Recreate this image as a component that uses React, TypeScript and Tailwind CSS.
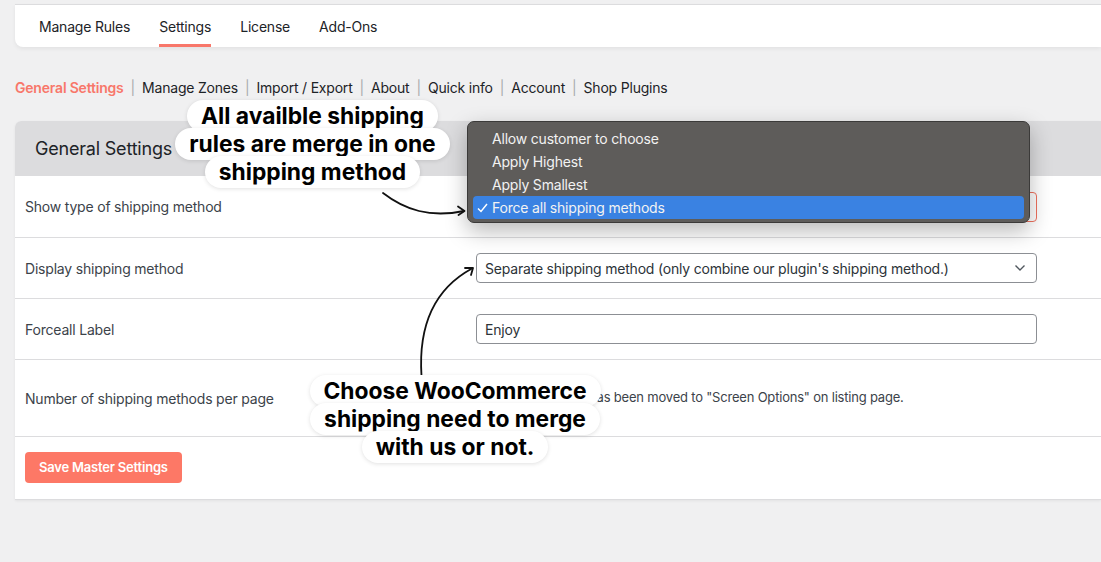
import type { ReactNode } from 'react'

const tabs = ['Manage Rules', 'Settings', 'License', 'Add-Ons']
const subLinks = [
  'General Settings',
  'Manage Zones',
  'Import / Export',
  'About',
  'Quick info',
  'Account',
  'Shop Plugins',
]
const options = [
  'Allow customer to choose',
  'Apply Highest',
  'Apply Smallest',
  'Force all shipping methods',
]

type RowProps = {
  label: string
  height: string
  children?: ReactNode
}

function Row({ label, height, children }: RowProps) {
  return (
    <div className={`flex items-center border-t border-[#dcdcde] ${height}`}>
      <div className="w-[461px] shrink-0 pl-[10px] text-[14px] text-[#3c434a]">
        {label}
      </div>
      {children}
    </div>
  )
}

function Bubble({ lines, className }: { lines: string[]; className: string }) {
  return (
    <div className={`absolute flex flex-col items-center tracking-normal ${className}`}>
      {lines.map((line, i) => (
        <div
          key={line}
          className={`rounded-[16px] bg-white px-[14px] py-[2px] text-[22.8px] leading-[28px] font-bold text-black shadow-[0_1px_4px_rgba(0,0,0,0.12)] ${
            i > 0 ? '-mt-[4px]' : ''
          }`}
        >
          {line}
        </div>
      ))}
    </div>
  )
}

export default function App() {
  return (
    <div className="relative h-[562px] w-full overflow-hidden bg-[#f0f0f1] font-['Inter',sans-serif] tracking-[-0.2px]">
      {/* top tab bar */}
      <div className="ml-[15px] mt-[4px] flex h-[43px] rounded-bl-[8px] border-t border-[#dcdcde] bg-white pl-[24px] shadow-[0_2px_4px_rgba(0,0,0,0.06)]">
        <div className="flex gap-[29px]">
          {tabs.map((t) => (
            <div
              key={t}
              className={`flex items-center border-b-[3px] pt-[3px] text-[14px] text-[#1d2327] ${
                t === 'Settings' ? 'border-[#f8776a]' : 'border-transparent'
              }`}
            >
              {t}
            </div>
          ))}
        </div>
      </div>

      {/* sub navigation */}
      <div className="ml-[15px] mt-[31px] flex h-[20px] items-center text-[14px] leading-[20px]">
        {subLinks.map((s, i) => (
          <div key={s} className="flex items-center">
            {i > 0 && <span className="mx-[7px] text-[#a7aaad]">|</span>}
            <span
              className={
                i === 0 ? 'font-semibold text-[#f8776a]' : 'text-[#1d2327]'
              }
            >
              {s}
            </span>
          </div>
        ))}
      </div>

      {/* settings card */}
      <div className="ml-[15px] mt-[23px] rounded-tl-[6px] border-b border-[#dcdcde] bg-white shadow-[0_1px_3px_rgba(0,0,0,0.06)]">
        <div className="flex h-[54px] items-center rounded-tl-[6px] bg-[#dcdcde] pl-[20px] text-[18px] text-[#1d2327]">
          General Settings
        </div>
        <Row label="Show type of shipping method" height="h-[62px]">
          <div className="flex h-[30px] w-[561px] items-center rounded-[4px] border border-[#f0725f] px-[8px] text-[14px] text-[#2c3338]">
            Force all shipping methods
          </div>
        </Row>
        <Row label="Display shipping method" height="h-[61px]">
          <div className="flex h-[30px] w-[561px] items-center justify-between rounded-[4px] border border-[#8c8f94] pl-[8px] pr-[10px] text-[14px] text-[#2c3338]">
            <span>Separate shipping method (only combine our plugin's shipping method.)</span>
            <svg width="12" height="8" viewBox="0 0 12 8" fill="none">
              <path d="M1.5 1.5 6 6l4.5-4.5" stroke="#50575e" strokeWidth="1.4" />
            </svg>
          </div>
        </Row>
        <Row label="Forceall Label" height="h-[61px]">
          <div className="flex h-[30px] w-[561px] items-center rounded-[4px] border border-[#8c8f94] px-[8px] text-[14px] text-[#2c3338]">
            Enjoy
          </div>
        </Row>
        <Row label="Number of shipping methods per page" height="h-[77px]">
          <div className="text-[13px] text-[#3c434a]">
            This setting option has been moved to "Screen Options" on listing page.
          </div>
        </Row>
        <div className="h-[63px] border-t border-[#dcdcde] pl-[10px] pt-[15px]">
          <button className="h-[31px] rounded-[4px] bg-[#fd7866] px-[14px] text-[13px] font-semibold text-white">
            Save Master Settings
          </button>
        </div>
      </div>

      {/* native dropdown popup */}
      <div className="absolute left-[467px] top-[121px] w-[563px] rounded-[7px] border border-[#3b3a39] bg-[#5e5c5a] px-[5px] pb-[3px] pt-[5px] shadow-[0_8px_22px_rgba(0,0,0,0.28)]">
        {options.map((o, i) => (
          <div
            key={o}
            className={`relative flex h-[23px] items-center rounded-[4px] pl-[19px] text-[14px] text-[#f2f2f2] ${
              i === 3 ? 'bg-[#3a82e2]' : ''
            }`}
          >
            {i === 3 && (
              <svg
                className="absolute left-[4px] top-[7px]"
                width="11"
                height="10"
                viewBox="0 0 11 10"
                fill="none"
              >
                <path d="M1 5.5 4 8.5 10 1" stroke="#fff" strokeWidth="1.5" />
              </svg>
            )}
            {o}
          </div>
        ))}
      </div>

      {/* annotation arrows */}
      <svg
        className="pointer-events-none absolute left-0 top-0"
        width="1101"
        height="562"
        fill="none"
      >
        <path
          d="M383 193 C 405 210, 430 218, 464 211"
          stroke="#111"
          strokeWidth="1.8"
          strokeLinecap="round"
        />
        <path
          d="M458 206.5 L464.5 211 L458.5 215"
          stroke="#111"
          strokeWidth="1.8"
          strokeLinecap="round"
          strokeLinejoin="round"
        />
        <path
          d="M421.5 376 C 418 322, 436 288, 472 268.5"
          stroke="#111"
          strokeWidth="1.8"
          strokeLinecap="round"
        />
        <path
          d="M465 268 L473 268 L471 275"
          stroke="#111"
          strokeWidth="1.8"
          strokeLinecap="round"
          strokeLinejoin="round"
        />
      </svg>

      <Bubble
        className="left-[165px] top-[100px] w-[295px]"
        lines={['All availble shipping', 'rules are merge in one', 'shipping method']}
      />
      <Bubble
        className="left-[295px] top-[375px] w-[320px]"
        lines={['Choose WooCommerce', 'shipping need to merge', 'with us or not.']}
      />
    </div>
  )
}
